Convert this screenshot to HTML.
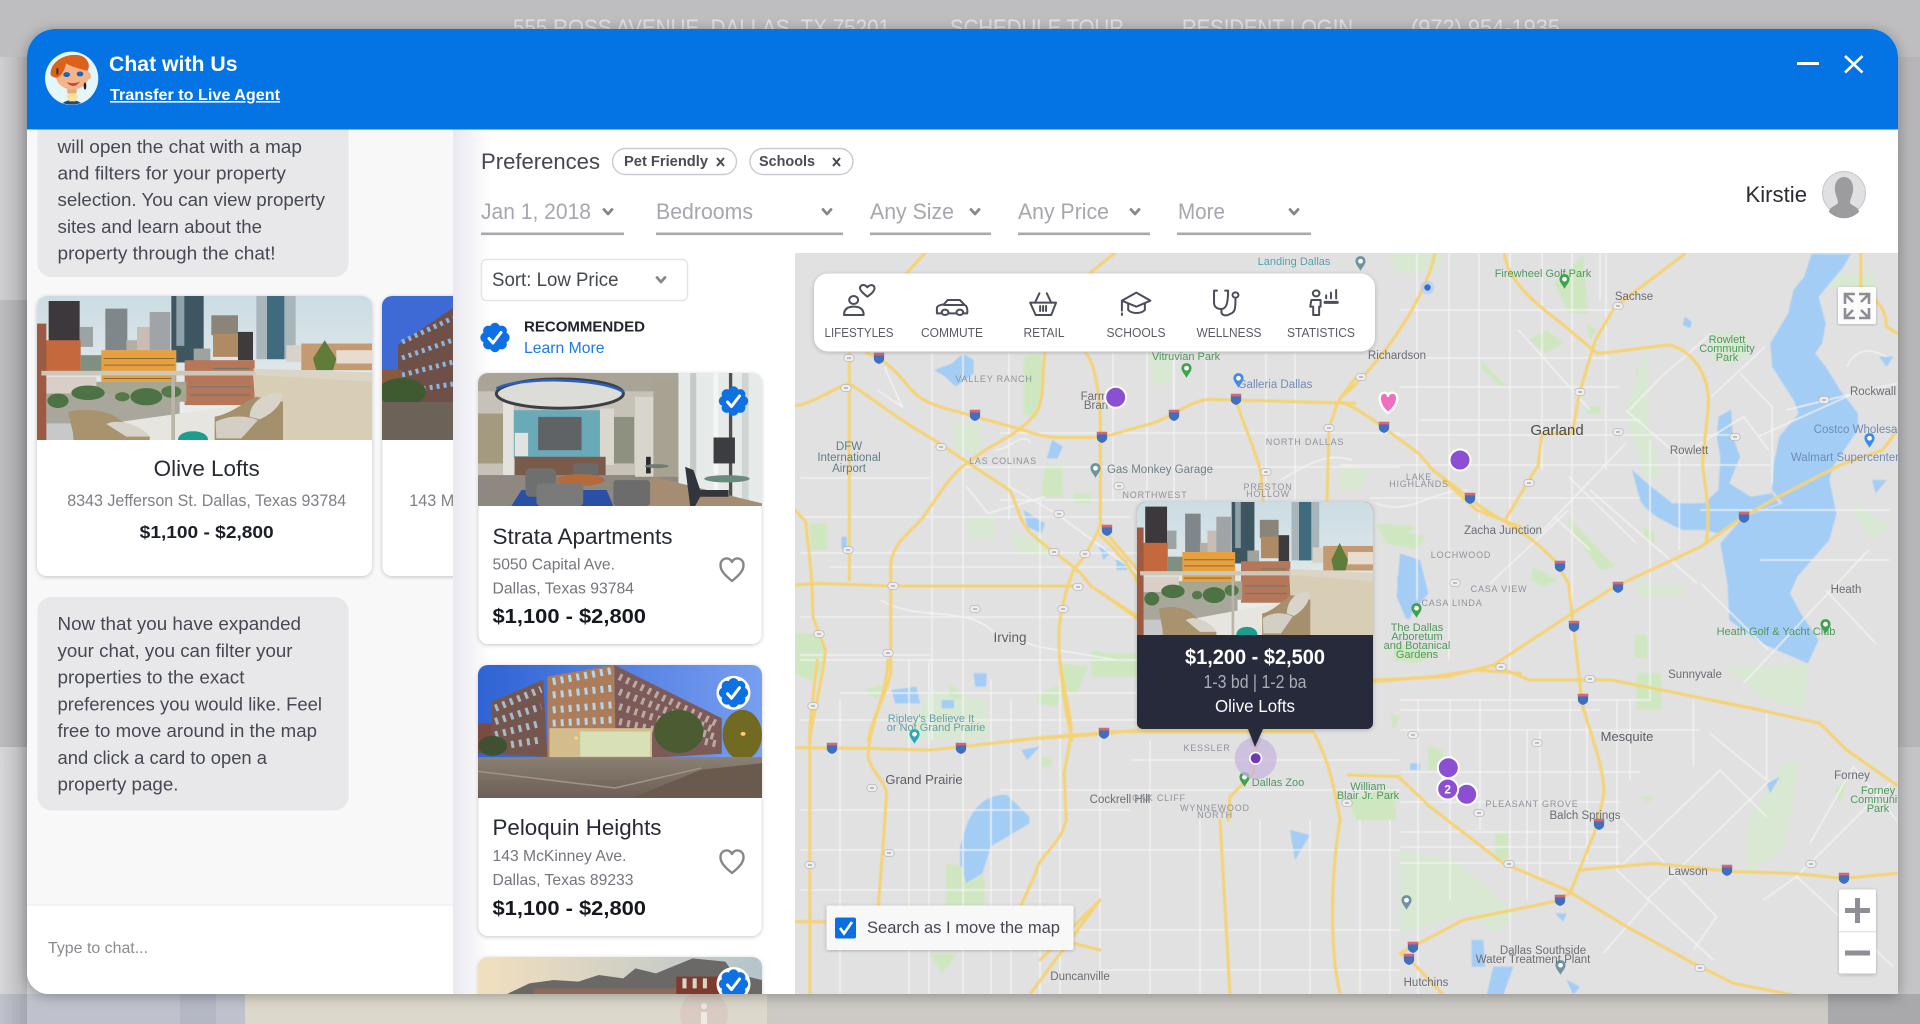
<!DOCTYPE html>
<html lang="en"><head><meta charset="utf-8"><title>Chat with Us</title>
<style>
html,body{margin:0;padding:0;width:1920px;height:1024px;overflow:hidden;background:#c8c8ca}
svg{display:block;font-family:"Liberation Sans",sans-serif}
path,ellipse,circle,line,polyline{vector-effect:non-scaling-stroke}
.y{fill:none;stroke:#f5d272;stroke-width:3;stroke-linejoin:round;stroke-linecap:round}
.w{fill:none;stroke:#f4f4f4;stroke-width:1.3}
.g{fill:#cfe7c1}.pg{fill:#d8e8d2}.b{fill:#a3cdf5}
.ml{font-size:11.5px;fill:#6c6e76;text-anchor:middle}
.mg{font-size:11px;fill:#4f9a5e;text-anchor:middle}
.mb{font-size:11.5px;fill:#6f8db5;text-anchor:middle}
.ms{font-size:9px;fill:#8f939c;text-anchor:middle;letter-spacing:.8px}
.chat{font-size:18px;fill:#464953}
.flt{font-size:22px;fill:#a6a6ad}
.tl{font-size:22.5px;fill:#272a34}
.ad{font-size:16px;fill:#74757d}
.pr{font-size:20.5px;fill:#16181f;font-weight:bold}
.ico{fill:none;stroke:#4b4e5a;stroke-width:2;stroke-linejoin:round;stroke-linecap:round}
.ilb{font-size:13px;fill:#5a5c65;text-anchor:middle}
.chev{fill:none;stroke:#85858c;stroke-width:2.8;stroke-linecap:round;stroke-linejoin:round}
</style></head><body>
<svg xmlns="http://www.w3.org/2000/svg" width="1920" height="1024" viewBox="0 0 1920 1024">
<defs>
<clipPath id="modal"><path d="M55,29H1870A28,28 0 0 1 1898,57V994H49A22,22 0 0 1 27,972V57A28,28 0 0 1 55,29Z"/></clipPath>
<clipPath id="mapc"><rect x="795" y="253" width="1103" height="741"/></clipPath>
<clipPath id="chatc"><rect x="27" y="129" width="426" height="776"/></clipPath>
<clipPath id="cardc1"><path d="M37,306a10,10 0 0 1 10,-10H362a10,10 0 0 1 10,10V440H37Z"/></clipPath>
<clipPath id="cardc2"><path d="M382,306a10,10 0 0 1 10,-10H453V440H382Z"/></clipPath>
<clipPath id="cardc3"><path d="M478,383a10,10 0 0 1 10,-10H752a10,10 0 0 1 10,10V506H478Z"/></clipPath>
<clipPath id="cardc4"><path d="M478,675a10,10 0 0 1 10,-10H752a10,10 0 0 1 10,10V798H478Z"/></clipPath>
<clipPath id="cardc5"><path d="M478,967a10,10 0 0 1 10,-10H752a10,10 0 0 1 10,10V994H478Z"/></clipPath>
<clipPath id="popc"><path d="M1137,511a9,9 0 0 1 9,-9H1364a9,9 0 0 1 9,9V635H1137Z"/></clipPath>
<clipPath id="avc"><circle cx="125" cy="115" r="79"/></clipPath>
<linearGradient id="sky1" x1="0" x2="0" y1="0" y2="1"><stop offset="0" stop-color="#cbdce3"/><stop offset="1" stop-color="#f0f1ee"/></linearGradient>
<linearGradient id="sky2" x1="0" x2="1" y1="0" y2="0"><stop offset="0" stop-color="#2f63d4"/><stop offset="1" stop-color="#789ef0"/></linearGradient>
<linearGradient id="sky3" x1="0" x2="1" y1="0" y2="0"><stop offset="0" stop-color="#f2dfbe"/><stop offset="1" stop-color="#b5c4cb"/></linearGradient>
<linearGradient id="pshade" x1="0" x2="1" y1="0" y2="0"><stop offset="0" stop-color="#e9e9f0"/><stop offset="1" stop-color="#ffffff"/></linearGradient>
<linearGradient id="lshade" x1="0" x2="1" y1="0" y2="0"><stop offset="0" stop-color="#000" stop-opacity="0"/><stop offset="1" stop-color="#000" stop-opacity=".14"/></linearGradient>
<linearGradient id="grd" x1="0" x2="0" y1="0" y2="1"><stop offset="0" stop-color="#8a8074"/><stop offset="1" stop-color="#6d5f54"/></linearGradient>
<filter id="sh" x="-5%" y="-5%" width="110%" height="110%"><feDropShadow dx="0" dy="1" stdDeviation="2" flood-color="#000" flood-opacity=".22"/></filter>
<filter id="shm" x="-5%" y="-5%" width="110%" height="110%"><feDropShadow dx="0" dy="2" stdDeviation="7" flood-color="#000" flood-opacity=".3"/></filter>
<filter id="soft" x="-2%" y="-2%" width="104%" height="104%"><feGaussianBlur stdDeviation=".6"/></filter>
<filter id="ph" x="-2%" y="-2%" width="104%" height="104%"><feGaussianBlur stdDeviation=".5"/></filter>

<symbol id="olive" viewBox="112 47 1005 433" preserveAspectRatio="none">
<g filter="url(#ph)">
<rect x="112" y="47" width="1005" height="433" fill="url(#sky1)"/>
<rect x="147" y="62" width="93" height="128" fill="#3d383a"/><rect x="240" y="140" width="40" height="60" fill="#9da2a5"/>
<rect x="317" y="85" width="66" height="125" fill="#7f878b"/><rect x="380" y="180" width="35" height="40" fill="#b4aea4"/>
<rect x="412" y="140" width="40" height="80" fill="#c8bdb4"/><rect x="450" y="95" width="62" height="115" fill="#a0a4a6"/>
<rect x="515" y="47" width="97" height="200" fill="#3c5662"/><rect x="530" y="47" width="24" height="150" fill="#8ea0a8"/>
<rect x="582" y="205" width="50" height="40" fill="#9ea39e"/>
<rect x="635" y="105" width="80" height="60" fill="#8a8479"/><rect x="640" y="160" width="75" height="70" fill="#b08a62"/>
<rect x="715" y="155" width="45" height="85" fill="#3e3b3b"/><rect x="770" y="47" width="118" height="190" fill="#a8b6bc"/><rect x="802" y="47" width="52" height="190" fill="#3f6a7d"/>
<rect x="860" y="195" width="50" height="50" fill="#d8d3c8"/><rect x="905" y="190" width="212" height="80" fill="#c49a72"/><rect x="1010" y="210" width="107" height="40" fill="#e8dcd0"/>
<rect x="135" y="180" width="108" height="100" fill="#c4683c"/><rect x="243" y="225" width="65" height="55" fill="#7f8f80"/>
<rect x="305" y="210" width="225" height="95" fill="#e6a040"/><path d="M312,235H525M312,255H525M312,275H525M312,295H525" stroke="#8b6a30" stroke-width="1" fill="none"/>
<rect x="555" y="240" width="210" height="135" fill="#b5765a"/><path d="M570,320H750M570,345H750M640,265H750" stroke="#6d7a70" stroke-width="1.2" fill="none"/><rect x="140" y="290" width="150" height="50" fill="#d9cfc6"/>
<rect x="290" y="305" width="270" height="60" fill="#a5a790"/>
<rect x="140" y="340" width="400" height="140" fill="#a9a79c"/>
<ellipse cx="175" cy="362" rx="32" ry="22" fill="#4e7345"/><ellipse cx="265" cy="338" rx="50" ry="22" fill="#4e7345"/><ellipse cx="368" cy="350" rx="22" ry="14" fill="#557a4a"/><ellipse cx="440" cy="350" rx="48" ry="26" fill="#4e7345"/><ellipse cx="515" cy="335" rx="30" ry="18" fill="#557a4a"/>
<rect x="140" y="430" width="80" height="50" fill="#c6c8ca"/>
<path d="M940,235L975,180L1010,235L1000,270L950,270Z" fill="#5f7b37"/>
<rect x="112" y="130" width="28" height="350" fill="#9c5a42"/>
<rect x="125" y="272" width="645" height="14" fill="#cdc7b9"/>
<path d="M760,282L1117,302V480H775Z" fill="#d8cdb5"/><path d="M760,265L1117,277V305L770,285Z" fill="#dcd5c6"/>
<path d="M330,430L720,375L790,480H330Z" fill="#e7e5df"/>
<rect x="515" y="285" width="11" height="195" fill="#b9b5a8"/>
<path d="M205,395C260,380 340,395 360,420L450,470V480H225Z" fill="#a8936e"/><path d="M320,432C360,412 430,440 450,470L380,470Z" fill="#d8d3c8"/>
<path d="M645,410C700,400 740,360 770,350L850,365V480H645Z" fill="#a4906c"/><path d="M750,410C750,370 790,335 848,340C850,370 820,400 780,418Z" fill="#d9d4ca"/><path d="M648,425C700,400 750,410 775,420L725,475H650Z" fill="#d4cfc5"/>
<path d="M535,480C535,445 625,445 625,480Z" fill="#1f9d8d"/>
</g>
</symbol>

<symbol id="strata" viewBox="55 368 850 400" preserveAspectRatio="none">
<g filter="url(#ph)">
<rect x="55" y="368" width="850" height="400" fill="#c6c2b8"/><rect x="55" y="368" width="600" height="55" fill="#aaa497"/>
<rect x="55" y="490" width="80" height="150" fill="#a39a80"/>
<rect x="160" y="480" width="265" height="145" fill="#6aa9b8"/><rect x="130" y="445" width="32" height="260" fill="#e4e2dc"/><rect x="420" y="475" width="42" height="170" fill="#dad7ce"/>
<rect x="235" y="500" width="130" height="100" fill="#5f6466"/><rect x="165" y="548" width="40" height="70" fill="#e2e2de"/>
<rect x="165" y="620" width="272" height="58" fill="#7a5a48"/>
<rect x="55" y="675" width="600" height="93" fill="#8e8880"/><path d="M155,768L185,720H440L460,768Z" fill="#2a4fa6"/>
<rect x="462" y="500" width="60" height="140" fill="#8e917f"/><rect x="525" y="440" width="55" height="240" fill="#d8d5cc"/><rect x="580" y="390" width="75" height="290" fill="#a8a293"/>
<rect x="655" y="368" width="250" height="400" fill="#e6eae8"/><rect x="690" y="368" width="18" height="400" fill="#c4cac8"/><rect x="760" y="368" width="14" height="400" fill="#f4f6f5"/><rect x="806" y="368" width="10" height="400" fill="#52514b"/><rect x="845" y="368" width="20" height="400" fill="#cfd5d3"/>
<path d="M580,680L905,760V768H470Z" fill="#a58c72"/>
<ellipse cx="300" cy="430" rx="190" ry="44" fill="#dcdcd8" stroke="#3c3f42" stroke-width="3"/><path d="M110,415C170,380 420,380 490,425" fill="none" stroke="#2a5fc0" stroke-width="2.5"/>
<rect x="197" y="655" width="92" height="85" rx="14" fill="#6e6f70"/><rect x="340" y="640" width="75" height="50" rx="10" fill="#6a6b6b"/>
<ellipse cx="362" cy="690" rx="72" ry="18" fill="#b56a3a"/>
<rect x="230" y="700" width="140" height="68" rx="12" fill="#7a7a7a"/><rect x="460" y="690" width="110" height="78" rx="10" fill="#6c6c6c"/>
<rect x="558" y="620" width="14" height="50" fill="#2a2a2c"/><ellipse cx="590" cy="648" rx="36" ry="6" fill="#6d7e78"/>
<rect x="760" y="562" width="64" height="78" fill="#3a3d40"/><ellipse cx="800" cy="686" rx="68" ry="11" fill="#6a8a80"/>
<path d="M675,650L700,660L720,720H805V740H720L705,768H690Z" fill="#33353a"/>
</g>
</symbol>

<symbol id="peloq" viewBox="46 15 692 400" preserveAspectRatio="none">
<g filter="url(#ph)">
<rect x="46" y="15" width="692" height="400" fill="url(#sky2)"/>
<path d="M80,125L205,60L215,292L80,282Z" fill="#75574f"/>
<path d="M215,50L378,15L382,300L215,292Z" fill="#ab7d5a"/>
<path d="M378,15L640,175V282L382,300Z" fill="#7b5a58"/>
<g fill="none" stroke-dasharray="3 5" stroke-width="7">
<path d="M228,65L372,32M228,105L372,85M228,150L372,135M228,190L372,180" stroke="#b9d3e6"/>
<path d="M88,145L200,88M88,185L200,140M88,225L200,190M88,262L200,240" stroke="#a8bac8"/>
<path d="M390,50L625,190M390,95L625,212M390,140L625,232M390,185L625,252" stroke="#baa9a6"/>
</g>
<rect x="220" y="205" width="250" height="88" fill="#d3bd8c"/><rect x="295" y="215" width="170" height="75" fill="#d8e0b8"/>
<rect x="46" y="190" width="34" height="90" fill="#7a4c42"/><ellipse cx="82" cy="258" rx="35" ry="30" fill="#3f5130"/>
<ellipse cx="535" cy="215" rx="60" ry="65" fill="#4c5b30"/><ellipse cx="690" cy="225" rx="48" ry="75" fill="#6f6a22"/><circle cx="692" cy="222" r="6" fill="#ffcc66"/><circle cx="285" cy="235" r="5" fill="#ffd27a"/>
<rect x="46" y="292" width="692" height="123" fill="url(#grd)"/><path d="M46,335L380,385L590,325" fill="none" stroke="#a09488" stroke-width="1.5"/><path d="M590,330L738,310V415H420Z" fill="#6a5a4e"/>
</g>
</symbol>

<symbol id="badge" viewBox="-15 -15 30 30">
<circle r="11" fill="#0d70e3"/><circle cx="9.5" cy="0" r="5.2" fill="#0d70e3"/><circle cx="6.7" cy="6.7" r="5.2" fill="#0d70e3"/><circle cx="0" cy="9.5" r="5.2" fill="#0d70e3"/><circle cx="-6.7" cy="6.7" r="5.2" fill="#0d70e3"/><circle cx="-9.5" cy="0" r="5.2" fill="#0d70e3"/><circle cx="-6.7" cy="-6.7" r="5.2" fill="#0d70e3"/><circle cx="0" cy="-9.5" r="5.2" fill="#0d70e3"/><circle cx="6.7" cy="-6.7" r="5.2" fill="#0d70e3"/>
<path d="M-6,1L-2,5.5L6,-5" fill="none" stroke="#fff" stroke-width="3" stroke-linecap="round" stroke-linejoin="round"/>
</symbol>
<symbol id="ish" viewBox="0 0 14 14"><path d="M1,1H13V8C13,11 10,13 7,14C4,13 1,11 1,8Z" fill="#3f6fbd"/><path d="M1,1H13V4H1Z" fill="#d9656e"/></symbol>
<symbol id="pin" viewBox="0 0 12 16"><path d="M6,0C2.5,0 .5,2.5 .5,5.5C.5,9 4,12 6,16C8,12 11.5,9 11.5,5.5C11.5,2.5 9.5,0 6,0Z"/><circle cx="6" cy="5.5" r="2.6" fill="#fff"/></symbol>
<symbol id="sh1" viewBox="0 0 14 10"><rect x=".6" y=".6" width="12.8" height="8.8" rx="4" fill="#ededed" stroke="#aeaeb1" stroke-width=".8"/><path d="M4.5,5H9.500" stroke="#a5a5a8" stroke-width="1.3"/></symbol>
</defs>

<!-- backdrop -->
<rect width="1920" height="1024" fill="#cfcfd1"/>
<rect width="1920" height="57" fill="#bebec0"/>
<rect y="300" width="27" height="447" fill="#bcbcbf"/>
<rect y="747" width="27" height="277" fill="#d6d6d9"/>
<rect x="1898" y="57" width="22" height="690" fill="#b6b6b9"/>
<rect x="1898" y="747" width="22" height="277" fill="#c4c4c6"/>
<rect x="0" y="994" width="245" height="30" fill="#bfc2cc"/>
<rect x="180" y="994" width="36" height="30" fill="#b4b8c5"/>
<rect x="245" y="994" width="522" height="30" fill="#dcd8cc"/>
<rect x="767" y="994" width="1061" height="30" fill="#cdcac6"/>
<rect x="1828" y="994" width="92" height="30" fill="#a9a9ac"/>
<circle cx="704" cy="1014" r="24" fill="#dacbc2"/><rect x="701" y="1003" width="6" height="6" rx="3" fill="#efe9e4"/><rect x="701" y="1012" width="6" height="14" fill="#efe9e4"/>
<rect x="0" y="57" width="27" height="967" fill="url(#lshade)"/>
<g font-size="22" fill="#e2e2e4"><text x="513" y="35" textLength="377" lengthAdjust="spacingAndGlyphs">555 ROSS AVENUE, DALLAS, TX 75201</text><text x="950" y="35" textLength="174" lengthAdjust="spacingAndGlyphs">SCHEDULE TOUR</text><text x="1182" y="35" textLength="171" lengthAdjust="spacingAndGlyphs">RESIDENT LOGIN</text><text x="1411" y="35" textLength="149" lengthAdjust="spacingAndGlyphs">(972) 954-1935</text></g>

<path d="M55,29H1870A28,28 0 0 1 1898,57V994H49A22,22 0 0 1 27,972V57A28,28 0 0 1 55,29Z" fill="#fff" filter="url(#shm)"/>

<g clip-path="url(#modal)">
<rect x="27" y="29" width="1871" height="965" fill="#fff"/>
<!-- map -->
<g clip-path="url(#mapc)">
<rect x="795" y="253" width="1103" height="741" fill="#e1e1e1"/>
<g filter="url(#soft)">
<!-- parks -->
<g transform="translate(795 340) scale(.35714 .33333)">
<path class="g" d="M640,50L690,40L695,150L680,230L640,225Z"/><path class="g" d="M700,375L750,375L750,470L690,470Z"/><path class="g" d="M40,550L90,550L90,630L45,630Z"/><path class="g" d="M0,880L70,880L90,930L60,1030L0,1000Z"/><path class="g" d="M830,930L960,955V1010L830,1010Z"/><path class="g" d="M750,970L820,980L790,1060L750,1060Z"/><path class="pg" d="M440,250L520,250L520,340L445,330Z"/><path class="pg" d="M480,540L560,520L560,600L490,600Z"/><path class="pg" d="M990,50L1060,40L1050,130L1000,130Z"/><path class="g" d="M780,460H830V490H780Z"/><path class="pg" d="M600,580L700,600L720,650L620,640Z"/><path class="pg" d="M380,1050L540,1080L540,1200L300,1200Z"/><path class="g" d="M680,1060L730,1060V1100L680,1090Z"/><path class="g" d="M430,1030L470,1060V1080L430,1070Z"/>
<path class="b" d="M390,90L440,70L470,40L500,60L500,100L450,140L420,110Z"/><path class="b" d="M720,300L750,320L735,355L705,355Z"/><path class="b" d="M850,620L880,630L865,650Z"/><path class="b" d="M900,660L930,660L930,690L900,690Z"/><path class="b" d="M500,1000L535,1000L535,1040L505,1040Z"/><path class="b" d="M270,1050L340,1040L350,1090L280,1090Z"/><path class="b" d="M640,510L700,550L690,580L650,560Z"/><path class="b" d="M130,590L145,590L145,625L130,625Z"/>
</g>
<g transform="translate(1340 250) scale(.35714 .33333)">
<path class="g" d="M600,100L680,15L695,190L640,190Z"/><path class="g" d="M530,270L580,240L625,280L575,310Z"/><path class="g" d="M690,220L720,240L700,270Z"/><path class="g" d="M835,340L845,520L812,520Z"/><path class="pg" d="M1040,250L1140,250L1140,330L1040,330Z"/><path class="g" d="M395,330L470,410L450,410L395,355Z"/><path class="g" d="M640,800L770,950L730,960L640,830Z"/><path class="g" d="M540,950L610,990L570,1010L535,990Z"/><path class="g" d="M830,1270H900V1380H830Z"/><path class="g" d="M825,1155H860V1225H825Z"/><path class="g" d="M100,820L240,860L215,900L130,880Z"/><path class="pg" d="M0,640L80,660L60,720L0,720Z"/><path class="pg" d="M860,290L800,480L850,680L900,680L860,500Z"/><path class="g" d="M850,830L880,850L880,880L850,870Z"/><path class="pg" d="M130,10L290,10L270,60L160,70Z"/><path class="pg" d="M1370,70L1500,70L1500,120L1370,110Z"/><path class="pg" d="M830,1000L960,1005L960,1040L830,1040Z"/><path class="pg" d="M1080,1250L1310,1240L1300,1380L1180,1340Z"/><path class="pg" d="M1440,760L1540,830L1490,870L1440,800Z"/><path class="g" d="M690,470H730V490H690Z"/><path class="g" d="M150,1180L280,1210L210,1240L150,1230Z"/>
<!-- water -->
<path class="b" d="M1320,12L1300,80L1270,120L1255,190L1205,280L1210,350L1270,450L1285,490L1230,560L1215,640L1210,720L1240,760L1130,800L1065,880L1085,1000L1090,1110L1180,1180L1310,1240L1340,1170L1290,1090L1260,1030L1280,980L1370,870L1390,790L1370,690L1380,650L1450,540L1450,490L1400,420L1360,350L1330,310L1350,280L1360,220L1340,140L1410,50L1430,12Z"/>
<path class="b" d="M1060,500L1095,480L1100,560L1120,620L1090,700L1150,740L1210,730L1230,760L1130,800L1060,850L1020,840L960,840C900,810 860,790 840,750L818,660L860,700L930,760L1020,760L1060,720L1065,620L1055,560Z"/>
<path class="b" d="M185,930L215,930L225,1000L245,1020L205,1070L195,1110L165,1050L160,980Z"/>
<path class="b" d="M965,200L985,215L980,235L960,225Z"/><path class="b" d="M1490,690L1530,690L1500,730Z"/><path class="b" d="M1510,320L1550,320L1530,350Z"/>
</g>
<g transform="translate(1400 700) scale(.33333)">
<path class="g" d="M85,145L130,165V210L85,210Z"/><path class="g" d="M285,400H325V480H285Z"/><path class="pg" d="M1040,370L1150,190L1200,180L1150,450L1040,520Z"/><path class="pg" d="M0,450L170,480L350,650L290,700L200,640L0,700Z"/><path class="g" d="M1305,270L1340,240L1320,310Z"/><path class="g" d="M720,290L760,290L745,310Z"/>
<path class="b" d="M215,720L250,720L255,800L215,800Z"/><path class="b" d="M280,800L340,800L310,885L260,885Z"/><path class="b" d="M500,840L540,860L520,885Z"/><path class="b" d="M465,640L500,640L490,665Z"/><path class="b" d="M1100,250L1140,230L1110,280Z"/><path class="b" d="M30,190L60,190V210L30,210Z"/>
</g>
<g transform="translate(460 660) scale(.40816 .33333)">
<path class="b" d="M1240,500C1260,430 1300,400 1340,405L1395,470V490L1300,560L1280,640L1240,670L1225,620L1225,560Z"/>
<path class="b" d="M1260,40L1290,40L1290,70L1265,70Z"/><path class="b" d="M1180,120L1210,120L1210,145L1180,145Z"/><path class="b" d="M1375,270L1420,260L1390,300Z"/>
<path class="g" d="M1190,610L1230,620L1240,670L1285,640V735H1190Z"/><path class="g" d="M1150,880H1220L1180,940Z"/><path class="g" d="M990,90L1040,70L1020,120Z"/><path class="g" d="M1415,100L1500,60L1460,140Z"/><path class="g" d="M1425,290H1450V320H1425Z"/>
</g>
<g transform="translate(1100 480) scale(.33333)">
<path class="g" d="M0,520L110,520V590L0,590Z"/><path class="g" d="M840,130L950,140L880,190Z"/><path class="g" d="M740,960L880,920L890,1020H770Z"/><path class="g" d="M985,800L1030,810L1020,880L985,860Z"/><path class="g" d="M870,700L900,710L880,750Z"/><path class="b" d="M900,220L960,240L985,340L920,420L890,350Z"/>
<path class="b" d="M0,205L30,220L10,240Z"/><path class="b" d="M45,240L80,240L70,270Z"/>
</g>
<path class="b" d="M1290,830L1310,835L1295,860Z"/>

<!-- streets -->
<path class="w" d="M1417,253V600M1449,253V660M1479,253V520M1510,253V700M1542,253V470M1572,253V640M1606,253V470M1650,440V700M1418,700V994M1450,700V900M1480,700V830M1510,700V950M1527,730V900M1540,730V880M1570,700V860M1587,720V860M1617,700V870M932,353V740M963,353V994M1009,353V520M1040,500V994M1113,353V500M1147,353V500M1174,353V500M1206,353V500M1266,353V500M1295,353V500M840,700V994M909,660V994M929,660V994M991,680V994M1011,700V994M1100,740V994M1150,740V994M1200,820V994M1260,820V994M1310,820V994M1360,820V994M1390,820V994M1060,640V994M1600,253V300"/>
<path class="w" d="M1400,310H1620M1400,358H1610M1400,387H1620M1420,420H1640M1390,435H1740M1340,465H1770M1370,498H1640M1000,433H1400M960,467H1400M1000,500H1140M800,517H1130M800,553H1140M830,567H1130M800,617H1140M800,660H1140M840,693H1140M800,720H1140M1130,760H1400M1000,790H1400M800,810H1130M800,850H1400M800,890H1100M1060,930H1400M1100,970H1400M1400,710H1600M1400,730H1700M1400,772H1640M1400,802H1620M1400,832H1620M1400,847H1620M1400,863H1620M1400,700H1650M800,478H930M800,655H930M1700,510H1890M1760,560H1890"/>
<g transform="translate(1340 250) scale(.35714 .33333)"><path class="w" d="M640,680L830,880M560,850L800,580M700,720L1000,1000M420,1000L640,780M800,480L950,620L950,900M950,620L1130,500L1200,600M1120,370L1210,470V700M1040,440L1190,290M1040,250L900,380L810,480M500,240L700,480M1130,1300L1480,900M1420,350C1440,300 1480,290 1530,320M100,760C200,800 250,720 360,720M600,800L700,900M1170,560L1440,430M1250,480L1440,430L1560,400M1010,1000L1200,1200M1360,1020L1500,1180"/></g>
<g transform="translate(1400 700) scale(.33333)"><path class="w" d="M660,350L950,650L880,750M660,500L960,210M740,600L1110,240M960,210L1100,350M1190,530L1480,240M650,510L940,780M1090,600L1190,530L1480,800M1230,430L1360,200L1490,360M930,100L1100,240V30M880,0V200M690,0V240M610,760L750,600"/></g>
<g transform="translate(795 340) scale(.35714 .33333)"><path class="w" d="M250,80L300,200L230,150M600,440L730,520L960,700M480,440L540,520L700,470M240,780C350,850 480,790 560,880L680,920L900,960M560,330C600,330 640,270 660,310M1060,40V240M1240,600L1320,520M1360,420C1450,360 1500,340 1560,360"/></g>

<!-- highways -->
<g transform="translate(795 340) scale(.35714 .33333)">
<path class="y" d="M200,40C240,50 280,90 310,130C340,170 360,185 420,205L640,270C680,285 710,293 740,293L860,292L1000,250C1060,228 1110,180 1160,178L1400,185L1568,190"/>
<path class="y" d="M0,198C50,190 100,150 150,130C200,160 260,220 390,300L480,365L600,450C620,480 620,530 660,580C700,620 760,660 800,700L830,740L960,830"/>
<path class="y" d="M152,40V720"/>
<path class="y" d="M700,40C690,100 700,160 680,210C650,260 600,290 540,325L480,370C430,410 400,470 360,530C320,580 270,610 268,680V1000C250,1080 220,1120 205,1200"/>
<path class="y" d="M815,40C840,70 850,150 855,230V540C860,560 830,610 810,650L780,690C760,740 745,810 740,860C735,950 750,1050 760,1120L775,1200"/>
<path class="y" d="M855,545L880,590L960,690"/>
<path class="y" d="M0,735L60,730L270,738L780,738"/>
<path class="y" d="M0,510L30,545C40,650 50,720 50,830L85,930C80,1000 60,1080 40,1200"/>
<path class="y" d="M1235,180C1250,240 1290,330 1305,400L1310,480M1568,115L1520,185L1495,265L1490,480"/>
<path class="y" d="M620,1200L860,1182L960,1170"/>
</g>
<g transform="translate(1340 250) scale(.35714 .33333)">
<path class="y" d="M265,10C255,80 200,190 160,250C110,330 50,400 0,445"/>
<path class="y" d="M0,455C50,470 130,540 220,610L260,660L370,750C420,800 500,820 600,930L640,1000L680,1380"/>
<path class="y" d="M460,10C470,100 560,170 620,220L720,310C790,305 860,290 920,285C990,300 1040,380 1030,480L1015,640C1020,720 1040,760 1025,880"/>
<path class="y" d="M965,12L770,170L715,270L670,430L650,550L565,552L555,645L465,805"/>
<path class="y" d="M95,1290L300,1280L430,1245L650,1090L770,1010L1010,890L1130,800L1220,745L1400,645L1520,600L1560,540"/>
<path class="y" d="M430,1245L530,1290H760L1180,1380"/>
<path class="y" d="M1458,10V110C1500,150 1530,170 1530,230L1560,250"/>
</g>
<g transform="translate(1400 700) scale(.33333)">
<path class="y" d="M545,0C560,80 610,180 612,280L590,380L510,580"/>
<path class="y" d="M0,235L90,320L310,490L500,570L680,680L880,790L1000,850L1180,885"/>
<path class="y" d="M540,510L760,490L1000,515L1180,520L1330,535L1490,520"/>
<path class="y" d="M930,0L1080,30L1260,70L1340,150L1490,255"/>
<path class="y" d="M0,760L190,660L460,605L510,580M0,760L40,790L130,885"/>
</g>
<g transform="translate(460 660) scale(.40816 .33333)">
<path class="y" d="M875,0L857,200V1000"/>
<path class="y" d="M1048,0C1048,100 1000,200 1000,290C1010,340 1040,360 1045,400L1040,500L1025,735"/>
<path class="y" d="M820,263L1000,265L1150,270C1250,260 1350,240 1500,225L1568,220"/>
<path class="y" d="M1470,0C1480,100 1500,180 1497,225L1480,340L1485,480C1470,560 1420,580 1410,640L1375,735"/>
<path class="y" d="M1503,850L1568,870M820,785H900"/>
</g>
<g transform="translate(1100 480) scale(.33333)">
<path class="y" d="M0,755L640,755M640,755C680,830 700,900 720,1020M470,800L460,880L390,950L385,1020"/>
<path class="y" d="M0,165C40,200 100,270 115,310M0,335L110,415M820,605L1000,590L1130,570L1260,580M1030,0L1130,90L1260,140M745,885L900,890"/>
</g>
<path class="y" d="M1340,820C1330,880 1330,950 1340,994M1100,900L1030,994M1220,820L1230,994M1040,960L1100,900"/>
<path class="y" d="M925,253L905,275M1115,253L1090,273"/>
</g>

<!-- shields -->
<g><use href="#ish" x="1378" y="421" width="12" height="12"/><use href="#ish" x="1464" y="492" width="12" height="12"/><use href="#ish" x="1554" y="560" width="12" height="12"/><use href="#ish" x="1568" y="620" width="12" height="12"/><use href="#ish" x="1577" y="693" width="12" height="12"/><use href="#ish" x="1612" y="581" width="12" height="12"/><use href="#ish" x="1738" y="511" width="12" height="12"/><use href="#ish" x="873" y="352" width="12" height="12"/><use href="#ish" x="969" y="409" width="12" height="12"/><use href="#ish" x="1096" y="431" width="12" height="12"/><use href="#ish" x="1168" y="409" width="12" height="12"/><use href="#ish" x="1230" y="393" width="12" height="12"/><use href="#ish" x="1101" y="524" width="12" height="12"/><use href="#ish" x="1098" y="727" width="12" height="12"/><use href="#ish" x="1593" y="818" width="12" height="12"/><use href="#ish" x="1721" y="864" width="12" height="12"/><use href="#ish" x="1838" y="872" width="12" height="12"/><use href="#ish" x="1554" y="894" width="12" height="12"/><use href="#ish" x="1407" y="941" width="12" height="12"/><use href="#ish" x="1403" y="953" width="12" height="12"/><use href="#ish" x="826" y="742" width="12" height="12"/><use href="#ish" x="955" y="742" width="12" height="12"/></g>
<g><use href="#sh1" x="1355" y="373" width="12" height="8"/><use href="#sh1" x="1612" y="302" width="12" height="8"/><use href="#sh1" x="1574" y="388" width="12" height="8"/><use href="#sh1" x="1612" y="428" width="12" height="8"/><use href="#sh1" x="1729" y="433" width="12" height="8"/><use href="#sh1" x="1818" y="396" width="12" height="8"/><use href="#sh1" x="1523" y="479" width="12" height="8"/><use href="#sh1" x="1449" y="579" width="12" height="8"/><use href="#sh1" x="1495" y="663" width="12" height="8"/><use href="#sh1" x="1584" y="675" width="12" height="8"/><use href="#sh1" x="843" y="354" width="12" height="8"/><use href="#sh1" x="840" y="384" width="12" height="8"/><use href="#sh1" x="935" y="443" width="12" height="8"/><use href="#sh1" x="1323" y="424" width="12" height="8"/><use href="#sh1" x="1260" y="468" width="12" height="8"/><use href="#sh1" x="1113" y="482" width="12" height="8"/><use href="#sh1" x="1053" y="510" width="12" height="8"/><use href="#sh1" x="1048" y="548" width="12" height="8"/><use href="#sh1" x="1079" y="550" width="12" height="8"/><use href="#sh1" x="1072" y="583" width="12" height="8"/><use href="#sh1" x="887" y="582" width="12" height="8"/><use href="#sh1" x="842" y="546" width="12" height="8"/><use href="#sh1" x="1057" y="605" width="12" height="8"/><use href="#sh1" x="969" y="605" width="12" height="8"/><use href="#sh1" x="882" y="649" width="12" height="8"/><use href="#sh1" x="813" y="630" width="12" height="8"/><use href="#sh1" x="807" y="702" width="12" height="8"/><use href="#sh1" x="1407" y="731" width="12" height="8"/><use href="#sh1" x="1531" y="739" width="12" height="8"/><use href="#sh1" x="1473" y="809" width="12" height="8"/><use href="#sh1" x="1503" y="860" width="12" height="8"/><use href="#sh1" x="1805" y="860" width="12" height="8"/><use href="#sh1" x="1694" y="964" width="12" height="8"/><use href="#sh1" x="1341" y="799" width="12" height="8"/><use href="#sh1" x="866" y="784" width="12" height="8"/><use href="#sh1" x="883" y="849" width="12" height="8"/><use href="#sh1" x="804" y="861" width="12" height="8"/></g>
<!-- pois -->
<g fill="#3fa34d"><use href="#pin" x="1559" y="274" width="11" height="15"/><use href="#pin" x="1411" y="603" width="11" height="15"/><use href="#pin" x="1820" y="619" width="11" height="15"/><use href="#pin" x="1181" y="363" width="11" height="15"/><use href="#pin" x="1239" y="772" width="11" height="15"/></g>
<g fill="#3d8ce8"><use href="#pin" x="1233" y="373" width="11" height="15"/><use href="#pin" x="1864" y="433" width="11" height="15"/></g>
<g fill="#6f93a0"><use href="#pin" x="1090" y="463" width="11" height="15"/><use href="#pin" x="1355" y="256" width="11" height="15"/><use href="#pin" x="1401" y="895" width="11" height="15"/><use href="#pin" x="1555" y="960" width="11" height="15"/></g>
<use href="#pin" x="909" y="729" width="11" height="15" fill="#2aa6b8"/>
<circle cx="1427.5" cy="287.5" r="7" fill="#b9cdf0" opacity=".7"/><circle cx="1427.5" cy="287.5" r="3.2" fill="#2a6fe0"/>
<!-- labels -->
<text class="ml" x="1397" y="359" font-size="12.5">Richardson</text>
<text class="ml" x="1557" y="435" style="font-size:15px;fill:#4a4c52">Garland</text>
<text class="ml" x="1634" y="300">Sachse</text><text class="ml" x="1689" y="454">Rowlett</text><text class="ml" x="1873" y="395">Rockwall</text><text class="ml" x="1846" y="593">Heath</text><text class="ml" x="1695" y="678">Sunnyvale</text><text class="ml" x="1503" y="534">Zacha Junction</text><text class="ml" x="1010" y="642" style="font-size:13.5px;fill:#5d5f66">Irving</text><text class="ml" x="924" y="784" style="font-size:13px;fill:#5d5f66">Grand Prairie</text><text class="ml" x="1627" y="741" style="font-size:13px;fill:#5d5f66">Mesquite</text><text class="ml" x="1852" y="779">Forney</text><text class="ml" x="1585" y="819">Balch Springs</text><text class="ml" x="1688" y="875">Lawson</text><text class="ml" x="1543" y="954">Dallas Southside</text><text class="ml" x="1533" y="963">Water Treatment Plant</text><text class="ml" x="1426" y="986">Hutchins</text><text class="ml" x="1094" y="400">Farm</text><text class="ml" x="1096" y="409">Bran</text><text class="ml" x="1120" y="803">Cockrell Hill</text><text class="ml" x="1160" y="473" style="fill:#6f8288">Gas Monkey Garage</text><text class="ml" x="1080" y="980">Duncanville</text>
<text class="ml" x="849" y="450" style="fill:#5f7f85">DFW</text><text class="ml" x="849" y="461" style="fill:#5f7f85">International</text><text class="ml" x="849" y="472" style="fill:#5f7f85">Airport</text>
<text class="mb" x="1860" y="433">Costco Wholesale</text><text class="mb" x="1845" y="461">Walmart Supercenter</text><text class="mb" x="1275" y="388">Galleria Dallas</text>
<text class="mg" x="1543" y="277">Firewheel Golf Park</text><text class="mg" x="1727" y="343">Rowlett</text><text class="mg" x="1727" y="352">Community</text><text class="mg" x="1727" y="361">Park</text><text class="mg" x="1776" y="635">Heath Golf &amp; Yacht Club</text><text class="mg" x="1417" y="631">The Dallas</text><text class="mg" x="1417" y="640">Arboretum</text><text class="mg" x="1417" y="649">and Botanical</text><text class="mg" x="1417" y="658">Gardens</text><text class="mg" x="1186" y="360">Vitruvian Park</text><text class="mg" x="1278" y="786">Dallas Zoo</text><text class="mg" x="1368" y="790">William</text><text class="mg" x="1368" y="799">Blair Jr. Park</text><text class="mg" x="1878" y="794">Forney</text><text class="mg" x="1878" y="803">Community</text><text class="mg" x="1878" y="812">Park</text><text class="mg" x="931" y="722" style="fill:#66a0a8">Ripley's Believe It</text><text class="mg" x="936" y="731" style="fill:#66a0a8">or Not Grand Prairie</text><text class="mg" x="1294" y="265" style="fill:#53a3ad">Landing Dallas</text>
<text class="ms" x="994" y="382">VALLEY RANCH</text><text class="ms" x="1003" y="464">LAS COLINAS</text><text class="ms" x="1305" y="445">NORTH DALLAS</text><text class="ms" x="1268" y="490">PRESTON</text><text class="ms" x="1268" y="497">HOLLOW</text><text class="ms" x="1155" y="498">NORTHWEST</text><text class="ms" x="1461" y="558">LOCHWOOD</text><text class="ms" x="1499" y="592">CASA VIEW</text><text class="ms" x="1452" y="606">CASA LINDA</text><text class="ms" x="1419" y="480">LAKE</text><text class="ms" x="1419" y="487">HIGHLANDS</text><text class="ms" x="1532" y="807">PLEASANT GROVE</text><text class="ms" x="1159" y="801">OAK CLIFF</text><text class="ms" x="1207" y="751">KESSLER</text><text class="ms" x="1215" y="811">WYNNEWOOD</text><text class="ms" x="1215" y="818">NORTH</text>

<!-- map markers -->
<circle cx="1115.7" cy="397.3" r="10.5" fill="#8b4fd3" stroke="#fff" stroke-width="2"/>
<circle cx="1460" cy="460" r="10.5" fill="#8b4fd3" stroke="#fff" stroke-width="2"/>
<circle cx="1448.3" cy="767.7" r="10.5" fill="#8b4fd3" stroke="#fff" stroke-width="2"/>
<circle cx="1466.7" cy="794.3" r="10.5" fill="#8b4fd3" stroke="#fff" stroke-width="2"/>
<circle cx="1447.7" cy="789" r="10.5" fill="#8b4fd3" stroke="#fff" stroke-width="2"/>
<text x="1447.7" y="793.5" font-size="12" font-weight="bold" fill="#fff" text-anchor="middle">2</text>
<path d="M1388,413C1378,405 1378,394 1383,393C1386,392 1388,394 1388,396C1388,394 1391,392 1394,393C1399,394 1399,405 1388,413Z" fill="#f06ec0" stroke="#fff" stroke-width="2.4" stroke-linejoin="round"/>
<circle cx="1255.7" cy="758.3" r="21" fill="#c5b3de" opacity=".7"/>
<circle cx="1255.7" cy="758.3" r="5.8" fill="#6f3bb0" stroke="#fff" stroke-width="1.6"/>

<!-- popup -->
<path d="M1137,511a9,9 0 0 1 9,-9H1364a9,9 0 0 1 9,9V723a6,6 0 0 1 -6,6H1263L1255,747L1248,729H1143a6,6 0 0 1 -6,-6Z" fill="#262b3a" filter="url(#sh)"/>
<g clip-path="url(#popc)"><use href="#olive" x="1137" y="502" width="236" height="133"/></g>
<text x="1255" y="664" font-size="21" font-weight="bold" fill="#fff" text-anchor="middle" textLength="140" lengthAdjust="spacingAndGlyphs">$1,200 - $2,500</text>
<text x="1255" y="688" font-size="18" fill="#a9adb6" text-anchor="middle" textLength="103" lengthAdjust="spacingAndGlyphs">1-3 bd | 1-2 ba</text>
<text x="1255" y="712" font-size="17.5" fill="#fff" text-anchor="middle" textLength="80" lengthAdjust="spacingAndGlyphs">Olive Lofts</text>

<!-- toolbar -->
<rect x="814" y="273.5" width="561" height="78" rx="14" fill="#fff" filter="url(#sh)"/>
<g transform="translate(810 260) scale(.37 .33333)" class="ico">
<ellipse cx="118" cy="120" rx="12" ry="12"/><path d="M92,165C92,145 105,140 118,140C132,140 145,145 145,165Z"/><path d="M155,110C140,97 132,88 136,80C140,72 150,74 155,82C160,74 172,72 174,82C176,90 168,100 155,110Z"/>
<path d="M343,160V143C345,136 352,134 362,133L372,120H405L418,135C425,138 426,148 425,160H414M396,160H374M356,160H343"/><ellipse cx="365" cy="157" rx="9" ry="8"/><ellipse cx="405" cy="157" rx="9" ry="8"/><path d="M362,135H418"/>
<path d="M595,128H665L652,165H610Z"/><path d="M608,128L620,100M652,128L640,100M622,138V153M630,138V153M638,138V153"/>
<path d="M882,98L920,122L882,140L843,122Z"/><path d="M860,132V150C870,162 895,162 905,150V132"/><path d="M843,122V152M843,160V165"/>
<path d="M1100,92H1092V128C1092,145 1105,147 1112,147C1125,147 1130,130 1130,92H1122"/><path d="M1112,147V158C1115,168 1128,168 1135,162C1148,158 1150,148 1150,116"/><ellipse cx="1150" cy="105" rx="8" ry="8"/>
<ellipse cx="1368" cy="100" rx="9" ry="9"/><path d="M1355,120H1380V140H1376V165H1360V140H1352Z"/><path d="M1395,115V106M1408,115V98M1422,115V90"/><path d="M1392,127H1425" stroke-width="3"/>
</g>
<text class="ilb" x="859" y="337" textLength="69" lengthAdjust="spacingAndGlyphs">LIFESTYLES</text>
<text class="ilb" x="952" y="337" textLength="62" lengthAdjust="spacingAndGlyphs">COMMUTE</text>
<text class="ilb" x="1044" y="337" textLength="41" lengthAdjust="spacingAndGlyphs">RETAIL</text>
<text class="ilb" x="1136" y="337" textLength="59" lengthAdjust="spacingAndGlyphs">SCHOOLS</text>
<text class="ilb" x="1229" y="337" textLength="65" lengthAdjust="spacingAndGlyphs">WELLNESS</text>
<text class="ilb" x="1321" y="337" textLength="68" lengthAdjust="spacingAndGlyphs">STATISTICS</text>

<!-- expand -->
<rect x="1838" y="287" width="38" height="37" rx="2" fill="#fff" fill-opacity=".92" filter="url(#sh)"/>
<g fill="none" stroke="#8d8d95" stroke-width="2.6"><path d="M1845,304V294H1855M1845,294L1853,302M1869,304V294H1859M1869,294L1861,302M1845,308V318H1855M1845,318L1853,310M1869,308V318H1859M1869,318L1861,310"/></g>

<!-- zoom -->
<rect x="1839" y="889.5" width="37" height="84" rx="2" fill="#fff" filter="url(#sh)"/>
<rect x="1839" y="931" width="37" height="1.5" fill="#e4e4e6"/>
<path d="M1857.5,898V923M1845,910.5H1870" stroke="#8e8e94" stroke-width="5" fill="none"/>
<path d="M1845,953H1870" stroke="#8e8e94" stroke-width="5" fill="none"/>

<!-- search check -->
<rect x="826.5" y="905.5" width="247" height="44.5" rx="2" fill="#f8f8f9" filter="url(#sh)"/>
<rect x="835" y="917.5" width="21" height="21" rx="2" fill="#0b6fe3"/>
<path d="M840,928L844,933.5L852,922" fill="none" stroke="#fff" stroke-width="2.6"/>
<text x="867" y="933" font-size="17" fill="#444751" textLength="193" lengthAdjust="spacingAndGlyphs">Search as I move the map</text>
</g>

<!-- top filters area -->
<rect x="453" y="129" width="1445" height="124" fill="#fff"/>
<rect x="453" y="129" width="342" height="865" fill="#fff"/>
<rect x="453" y="129" width="38" height="865" fill="url(#pshade)"/>

<text x="481" y="169" font-size="22" fill="#444750" textLength="119" lengthAdjust="spacingAndGlyphs">Preferences</text>
<rect x="612.5" y="148.5" width="124" height="26" rx="13" fill="#fff" stroke="#c9c9cf" stroke-width="1.4"/>
<text x="624" y="166" font-size="14.5" font-weight="bold" fill="#4a4c55" textLength="84" lengthAdjust="spacingAndGlyphs">Pet Friendly</text>
<path d="M717,158L724,166M724,158L717,166" stroke="#4a4c55" stroke-width="2" fill="none"/>
<rect x="750" y="148.5" width="103" height="26" rx="13" fill="#fff" stroke="#c9c9cf" stroke-width="1.4"/>
<text x="759" y="166" font-size="14.5" font-weight="bold" fill="#4a4c55" textLength="56" lengthAdjust="spacingAndGlyphs">Schools</text>
<path d="M833,158L840,166M840,158L833,166" stroke="#4a4c55" stroke-width="2" fill="none"/>

<text class="flt" x="481" y="219" textLength="110" lengthAdjust="spacingAndGlyphs">Jan 1, 2018</text><path class="chev" d="M604,209.500L608,214L612,209.500"/><rect x="481" y="232.5" width="143" height="2.6" fill="#a8a8ae"/>
<text class="flt" x="656" y="219" textLength="97" lengthAdjust="spacingAndGlyphs">Bedrooms</text><path class="chev" d="M823,209.500L827,214L831,209.500"/><rect x="656" y="232.5" width="187" height="2.6" fill="#a8a8ae"/>
<text class="flt" x="870" y="219" textLength="84" lengthAdjust="spacingAndGlyphs">Any Size</text><path class="chev" d="M971,209.500L975,214L979,209.500"/><rect x="870" y="232.5" width="121" height="2.6" fill="#a8a8ae"/>
<text class="flt" x="1018" y="219" textLength="91" lengthAdjust="spacingAndGlyphs">Any Price</text><path class="chev" d="M1131,209.500L1135,214L1139,209.500"/><rect x="1018" y="232.5" width="132" height="2.6" fill="#a8a8ae"/>
<text class="flt" x="1178" y="219" textLength="47" lengthAdjust="spacingAndGlyphs">More</text><path class="chev" d="M1290,209.500L1294,214L1298,209.500"/><rect x="1177" y="232.5" width="134" height="2.6" fill="#a8a8ae"/>

<text x="1745.5" y="202" font-size="22" fill="#2a2c34" textLength="61.5" lengthAdjust="spacingAndGlyphs">Kirstie</text>
<circle cx="1844" cy="193" r="21.5" fill="#e0e0e2" stroke="#c6c6ca" stroke-width="1"/>
<path d="M1844,177C1838,177 1834,183 1835,191C1836,197 1838,199 1838,203C1836,206 1829,207 1829,212A21,21 0 0 0 1859,212C1859,207 1852,206 1850,203C1850,199 1852,197 1853,191C1854,183 1850,177 1844,177Z" fill="#9c9c9f"/>

<!-- sort -->
<rect x="481.5" y="259.5" width="206" height="41" rx="5" fill="#fff" stroke="#e3e3e7" stroke-width="1.4"/>
<text x="492" y="286" font-size="19" fill="#444751" textLength="126.5" lengthAdjust="spacingAndGlyphs">Sort: Low Price</text>
<path class="chev" d="M657,277.500L661,282L665,277.500"/>

<use href="#badge" x="480" y="322.5" width="30" height="30"/>
<text x="524" y="331.5" font-size="15" font-weight="bold" fill="#20232c" textLength="121" lengthAdjust="spacingAndGlyphs">RECOMMENDED</text>
<text x="524" y="353" font-size="16" fill="#1a7ae8" textLength="80.5" lengthAdjust="spacingAndGlyphs">Learn More</text>

<!-- strata card -->
<rect x="478.5" y="373" width="283" height="271" rx="10" fill="#fff" filter="url(#sh)"/>
<g clip-path="url(#cardc3)"><use href="#strata" x="478" y="373" width="284" height="133"/></g>
<use href="#badge" x="718.5" y="386" width="30" height="30"/>
<text class="tl" x="492.5" y="544" textLength="180" lengthAdjust="spacingAndGlyphs">Strata Apartments</text>
<text class="ad" x="492.5" y="569.5" textLength="122.5" lengthAdjust="spacingAndGlyphs">5050 Capital Ave.</text>
<text class="ad" x="492.5" y="593.5" textLength="141.5" lengthAdjust="spacingAndGlyphs">Dallas, Texas 93784</text>
<text class="pr" x="492.5" y="623" textLength="153.5" lengthAdjust="spacingAndGlyphs">$1,100 - $2,800</text>
<path d="M732,581C722,573 720.500,569 720.500,565C720.500,558 729,556 732,562C735,556 743.500,558 743.500,565C743.500,569 742,573 732,581Z" fill="none" stroke="#85858b" stroke-width="2.4" stroke-linejoin="round"/>

<!-- peloquin card -->
<rect x="478.5" y="665" width="283" height="271" rx="10" fill="#fff" filter="url(#sh)"/>
<g clip-path="url(#cardc4)"><use href="#peloq" x="478" y="665" width="284" height="133"/></g>
<circle cx="733.5" cy="692.7" r="17" fill="#fff"/><use href="#badge" x="718.5" y="677.700" width="30" height="30"/>
<text class="tl" x="492.5" y="835" textLength="169" lengthAdjust="spacingAndGlyphs">Peloquin Heights</text>
<text class="ad" x="492.5" y="861" textLength="134" lengthAdjust="spacingAndGlyphs">143 McKinney Ave.</text>
<text class="ad" x="492.5" y="885" textLength="141" lengthAdjust="spacingAndGlyphs">Dallas, Texas 89233</text>
<text class="pr" x="492.5" y="915" textLength="153.5" lengthAdjust="spacingAndGlyphs">$1,100 - $2,800</text>
<path d="M732,873C722,865 720.500,861 720.500,857C720.500,850 729,848 732,854C735,848 743.500,850 743.500,857C743.500,861 742,865 732,873Z" fill="none" stroke="#85858b" stroke-width="2.4" stroke-linejoin="round"/>

<!-- third card -->
<rect x="478.5" y="957" width="283" height="60" rx="10" fill="#fff" filter="url(#sh)"/>
<g clip-path="url(#cardc5)"><rect x="478" y="957" width="284" height="40" fill="url(#sky3)"/>
<g transform="translate(460 660) scale(.40816 .33333)"><path d="M110,1005L170,970L230,960L290,965L340,945L400,955L430,925L480,940L570,895L650,905L670,940L740,960V1010H110Z" fill="#6b6967"/><path d="M180,985H530V1010H180Z" fill="#8d6a5a"/><path d="M530,950H660V1010H530Z" fill="#7c3b2c"/><path d="M545,955H555V985H545ZM570,955H580V985H570ZM595,955H605V985H595Z" fill="#d9d4c8"/></g></g>
<circle cx="733.5" cy="984" r="17" fill="#fff"/><use href="#badge" x="718.500" y="969" width="30" height="30"/>

<!-- chat panel -->
<rect x="27" y="129" width="426" height="776" fill="#f8f8f9"/>
<rect x="27" y="905" width="426" height="89" fill="#fff"/>
<rect x="27" y="904.500" width="426" height="1.2" fill="#ececee"/>
<text x="48" y="953" font-size="16" fill="#8a8a90" textLength="100" lengthAdjust="spacingAndGlyphs">Type to chat...</text>
<g clip-path="url(#chatc)">
<path d="M37.500,100H348.500V263a14,14 0 0 1 -14,14H51.500a14,14 0 0 1 -14,-14Z" fill="#e8e8ea"/>
<text class="chat" x="57.500" y="153" textLength="244.500" lengthAdjust="spacingAndGlyphs">will open the chat with a map</text>
<text class="chat" x="57.500" y="179.500" textLength="228.500" lengthAdjust="spacingAndGlyphs">and filters for your property</text>
<text class="chat" x="57.500" y="206" textLength="267.500" lengthAdjust="spacingAndGlyphs">selection. You can view property</text>
<text class="chat" x="57.500" y="233" textLength="204.500" lengthAdjust="spacingAndGlyphs">sites and learn about the</text>
<text class="chat" x="57.500" y="259.500" textLength="218" lengthAdjust="spacingAndGlyphs">property through the chat!</text>

<rect x="37" y="296" width="335" height="280" rx="10" fill="#fff" filter="url(#sh)"/>
<g clip-path="url(#cardc1)"><use href="#olive" x="37" y="296" width="335" height="144"/></g>
<text x="206.700" y="476" font-size="22" fill="#272a34" text-anchor="middle" textLength="106" lengthAdjust="spacingAndGlyphs">Olive Lofts</text>
<text x="206.700" y="506" font-size="16.500" fill="#7e7f86" text-anchor="middle" textLength="279" lengthAdjust="spacingAndGlyphs">8343 Jefferson St. Dallas, Texas 93784</text>
<text x="206.700" y="538" font-size="17.500" font-weight="bold" fill="#1b1e28" text-anchor="middle" textLength="134" lengthAdjust="spacingAndGlyphs">$1,100 - $2,800</text>

<rect x="382.500" y="296" width="120" height="280" rx="10" fill="#fff" filter="url(#sh)"/>
<g clip-path="url(#cardc2)"><rect x="382" y="296" width="72" height="144" fill="#3d6ad4"/>
<path d="M398,345L453,308V420H398Z" fill="#6e5049"/><path d="M402,342L453,318M402,358L453,340M402,375L453,362M402,392L453,384" stroke="#8fb4d8" stroke-width="5" stroke-dasharray="3 4" fill="none"/><rect x="382" y="370" width="20" height="40" fill="#8a5a40"/><ellipse cx="402" cy="392" rx="24" ry="14" fill="#3f5a30"/><rect x="382" y="402" width="72" height="38" fill="#6d6258"/></g>
<text x="409.300" y="506" font-size="16.500" fill="#7e7f86" textLength="45" lengthAdjust="spacingAndGlyphs">143 M</text>

<rect x="37.500" y="597" width="311" height="213.500" rx="14" fill="#e8e8ea"/>
<text class="chat" x="57.500" y="630" textLength="243.500" lengthAdjust="spacingAndGlyphs">Now that you have expanded</text>
<text class="chat" x="57.500" y="657" textLength="235" lengthAdjust="spacingAndGlyphs">your chat, you can filter your</text>
<text class="chat" x="57.500" y="683.500" textLength="187" lengthAdjust="spacingAndGlyphs">properties to the exact</text>
<text class="chat" x="57.500" y="710.500" textLength="264.500" lengthAdjust="spacingAndGlyphs">preferences you would like. Feel</text>
<text class="chat" x="57.500" y="737" textLength="259.500" lengthAdjust="spacingAndGlyphs">free to move around in the map</text>
<text class="chat" x="57.500" y="764" textLength="209.500" lengthAdjust="spacingAndGlyphs">and click a card to open a</text>
<text class="chat" x="57.500" y="790.500" textLength="121" lengthAdjust="spacingAndGlyphs">property page.</text>
</g>

<!-- header -->
<rect x="27" y="29" width="1871" height="100.500" fill="#0473e4"/>
<g transform="translate(30 40) scale(.33333)">
<circle cx="125" cy="115" r="80" fill="#e3f6fb"/>
<g clip-path="url(#avc)">
<path d="M88,205C96,172 154,172 164,205Z" fill="#1f4a7c"/>
<path d="M108,168L125,152L146,168L136,184H118Z" fill="#f6e29e"/>
<rect x="112" y="128" width="28" height="32" fill="#eda67a"/>
<ellipse cx="127" cy="105" rx="50" ry="44" fill="#f3b488"/>
<ellipse cx="176" cy="108" rx="7" ry="10" fill="#f3b488"/>
<path d="M62,105C58,70 100,38 150,46C176,54 182,80 172,92C148,86 124,80 108,70C104,96 84,128 62,105Z" fill="#dc611b"/>
<ellipse cx="110" cy="104" rx="10" ry="7.500" fill="#1a63b8"/><ellipse cx="150" cy="102" rx="10" ry="7.500" fill="#1a63b8"/>
<path d="M110,126C122,142 138,142 150,124C138,131 122,131 110,126Z" fill="#b54a3c"/>
<path d="M82,85V103" stroke="#333" stroke-width="2" fill="none"/>
<ellipse cx="165" cy="138" rx="4" ry="11" fill="#222"/>
</g></g>
<text x="109" y="71" font-size="21" font-weight="bold" fill="#fff" textLength="128.500" lengthAdjust="spacingAndGlyphs">Chat with Us</text>
<text x="110" y="100" font-size="16" font-weight="bold" fill="#fff" text-decoration="underline" textLength="170" lengthAdjust="spacingAndGlyphs">Transfer to Live Agent</text>
<rect x="1797" y="62" width="22" height="3" fill="#fff"/>
<path d="M1845,56L1862.500,72.500M1862.500,56L1845,72.500" stroke="#fff" stroke-width="2.600" fill="none"/>
</g>
</svg>
</body></html>
